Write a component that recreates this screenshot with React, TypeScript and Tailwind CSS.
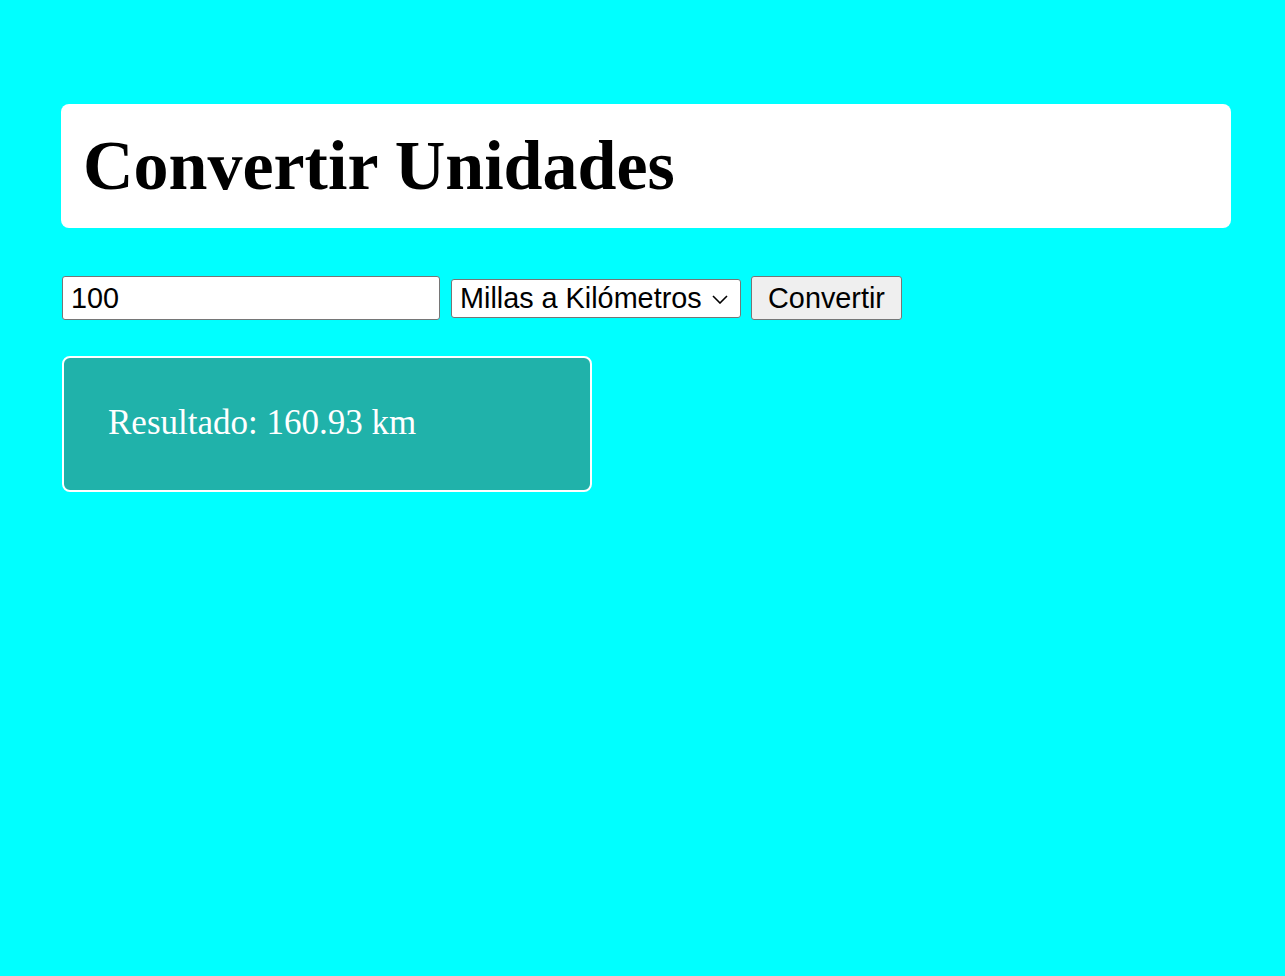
import React from "react";

export default function App() {
  return (
    <div className="min-h-[976px] w-full bg-[#00ffff] pt-[104px] pl-[61px] pr-[54px]">
      <div className="flex h-[124px] items-center rounded-[8px] bg-white px-[22px]">
        <h1 className="text-[70px] font-bold leading-none text-black" style={{ fontFamily: '"Liberation Serif", "Times New Roman", serif' }}>
          Convertir Unidades
        </h1>
      </div>
      <div className="mt-[48px] flex items-center pl-[1px]" style={{ fontFamily: '"Liberation Sans", Arial, sans-serif' }}>
        <input
          defaultValue="100"
          className="h-[44px] w-[378px] rounded-[3px] border border-[#767676] bg-white px-[8px] text-[28.8px] leading-none text-black outline-none"
        />
        <div className="relative ml-[11px] h-[39px] w-[290px]">
          <select className="h-full w-full appearance-none rounded-[3px] border border-[#767676] bg-white pl-[8px] pr-[30px] text-[28.8px] leading-none text-black outline-none">
            <option>Millas a Kilómetros</option>
          </select>
          <svg className="pointer-events-none absolute right-[13px] top-[16px]" width="16" height="9" viewBox="0 0 16 9">
            <path d="M1 1 L8 8 L15 1" fill="none" stroke="black" strokeWidth="1.6" />
          </svg>
        </div>
        <button className="ml-[10px] h-[44px] w-[151px] rounded-[3px] border border-[#767676] bg-[#efefef] text-[28.8px] leading-none text-black">
          Convertir
        </button>
      </div>
      <div className="mt-[36px] ml-[1px] flex h-[136px] w-[530px] items-center rounded-[8px] border-2 border-white bg-[#20b2aa] pl-[44px] pb-[4px]">
        <p className="text-[35px] leading-none text-white" style={{ fontFamily: '"Liberation Serif", "Times New Roman", serif' }}>
          Resultado: 160.93 km
        </p>
      </div>
    </div>
  );
}
